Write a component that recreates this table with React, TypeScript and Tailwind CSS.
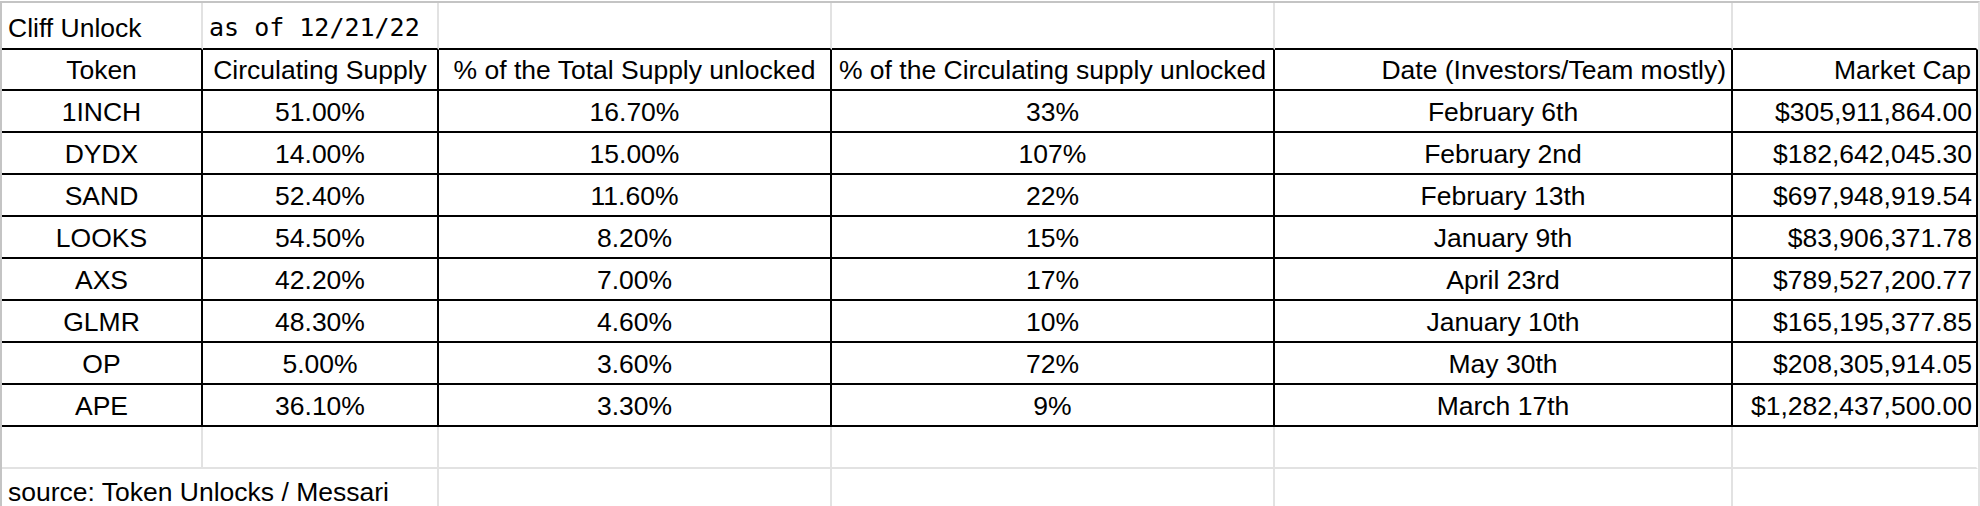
import React from "react";

const rows: string[][] = [
  ["1INCH", "51.00%", "16.70%", "33%", "February 6th", "$305,911,864.00"],
  ["DYDX", "14.00%", "15.00%", "107%", "February 2nd", "$182,642,045.30"],
  ["SAND", "52.40%", "11.60%", "22%", "February 13th", "$697,948,919.54"],
  ["LOOKS", "54.50%", "8.20%", "15%", "January 9th", "$83,906,371.78"],
  ["AXS", "42.20%", "7.00%", "17%", "April 23rd", "$789,527,200.77"],
  ["GLMR", "48.30%", "4.60%", "10%", "January 10th", "$165,195,377.85"],
  ["OP", "5.00%", "3.60%", "72%", "May 30th", "$208,305,914.05"],
  ["APE", "36.10%", "3.30%", "9%", "March 17th", "$1,282,437,500.00"],
];

const headers = [
  "Token",
  "Circulating Supply",
  "% of the Total Supply unlocked",
  "% of the Circulating supply unlocked",
  "Date (Investors/Team mostly)",
  "Market Cap",
];

export default function App() {
  return (
    <div
      className="w-[1980px] h-[506px] overflow-hidden bg-white pt-[1px] text-black"
      style={{ fontFamily: '"Liberation Sans", Arial, sans-serif' }}
    >
      <div className="border-t-2 border-l-2 border-r-2 border-t-[#c4c4c4] border-l-[#c4c4c4] border-r-[#e2e2e2] grid grid-cols-[201px_236px_393px_443px_458px_245px] text-[26.5px] leading-[30px]">
        {/* Row 1 */}
        <div className="h-[47px] border-r-2 border-b-2 border-r-[#e2e2e2] border-b-black flex items-end pb-[5px] pl-[6px] whitespace-nowrap">
          Cliff Unlock
        </div>
        <div
          className="h-[47px] border-r-2 border-b-2 border-r-[#e2e2e2] border-b-black flex items-end pb-[5px] pl-[6px] whitespace-nowrap text-[25px]"
          style={{ fontFamily: '"DejaVu Sans Mono", "Liberation Mono", monospace' }}
        >
          as of 12/21/22
        </div>
        <div className="h-[47px] border-r-2 border-b-2 border-r-[#e2e2e2] border-b-black" />
        <div className="h-[47px] border-r-2 border-b-2 border-r-[#e2e2e2] border-b-black" />
        <div className="h-[47px] border-r-2 border-b-2 border-r-[#e2e2e2] border-b-black" />
        <div className="h-[47px] border-r-2 border-b-2 border-r-white border-b-black" />

        {/* Header row */}
        {headers.map((h, i) => (
          <div
            key={h}
            className={
              "h-[41px] border-r-2 border-b-2 border-black flex items-center whitespace-nowrap px-[5px] " +
              (i >= 4 ? "justify-end" : "justify-center")
            }
          >
            {h}
          </div>
        ))}

        {/* Data rows */}
        {rows.map((r) =>
          r.map((c, i) => (
            <div
              key={r[0] + i}
              className={
                "h-[42px] border-r-2 border-b-2 border-black flex items-center whitespace-nowrap px-[4px] pt-[2px] " +
                (i === 5 ? "justify-end" : "justify-center")
              }
            >
              {c}
            </div>
          ))
        )}

        {/* Empty row */}
        <div className="h-[42px] border-r-2 border-b-2 border-[#e2e2e2]" />
        <div className="h-[42px] border-r-2 border-b-2 border-[#e2e2e2]" />
        <div className="h-[42px] border-r-2 border-b-2 border-[#e2e2e2]" />
        <div className="h-[42px] border-r-2 border-b-2 border-[#e2e2e2]" />
        <div className="h-[42px] border-r-2 border-b-2 border-[#e2e2e2]" />
        <div className="h-[42px] border-r-2 border-b-2 border-r-white border-b-[#e2e2e2]" />

        {/* Source row */}
        <div className="col-span-2 h-[42px] border-r-2 border-[#e2e2e2] flex items-center pl-[6px] pt-[4px] whitespace-nowrap">
          source: Token Unlocks / Messari
        </div>
        <div className="h-[42px] border-r-2 border-[#e2e2e2]" />
        <div className="h-[42px] border-r-2 border-[#e2e2e2]" />
        <div className="h-[42px] border-r-2 border-[#e2e2e2]" />
        <div className="h-[42px] border-r-2 border-white" />
      </div>
    </div>
  );
}
